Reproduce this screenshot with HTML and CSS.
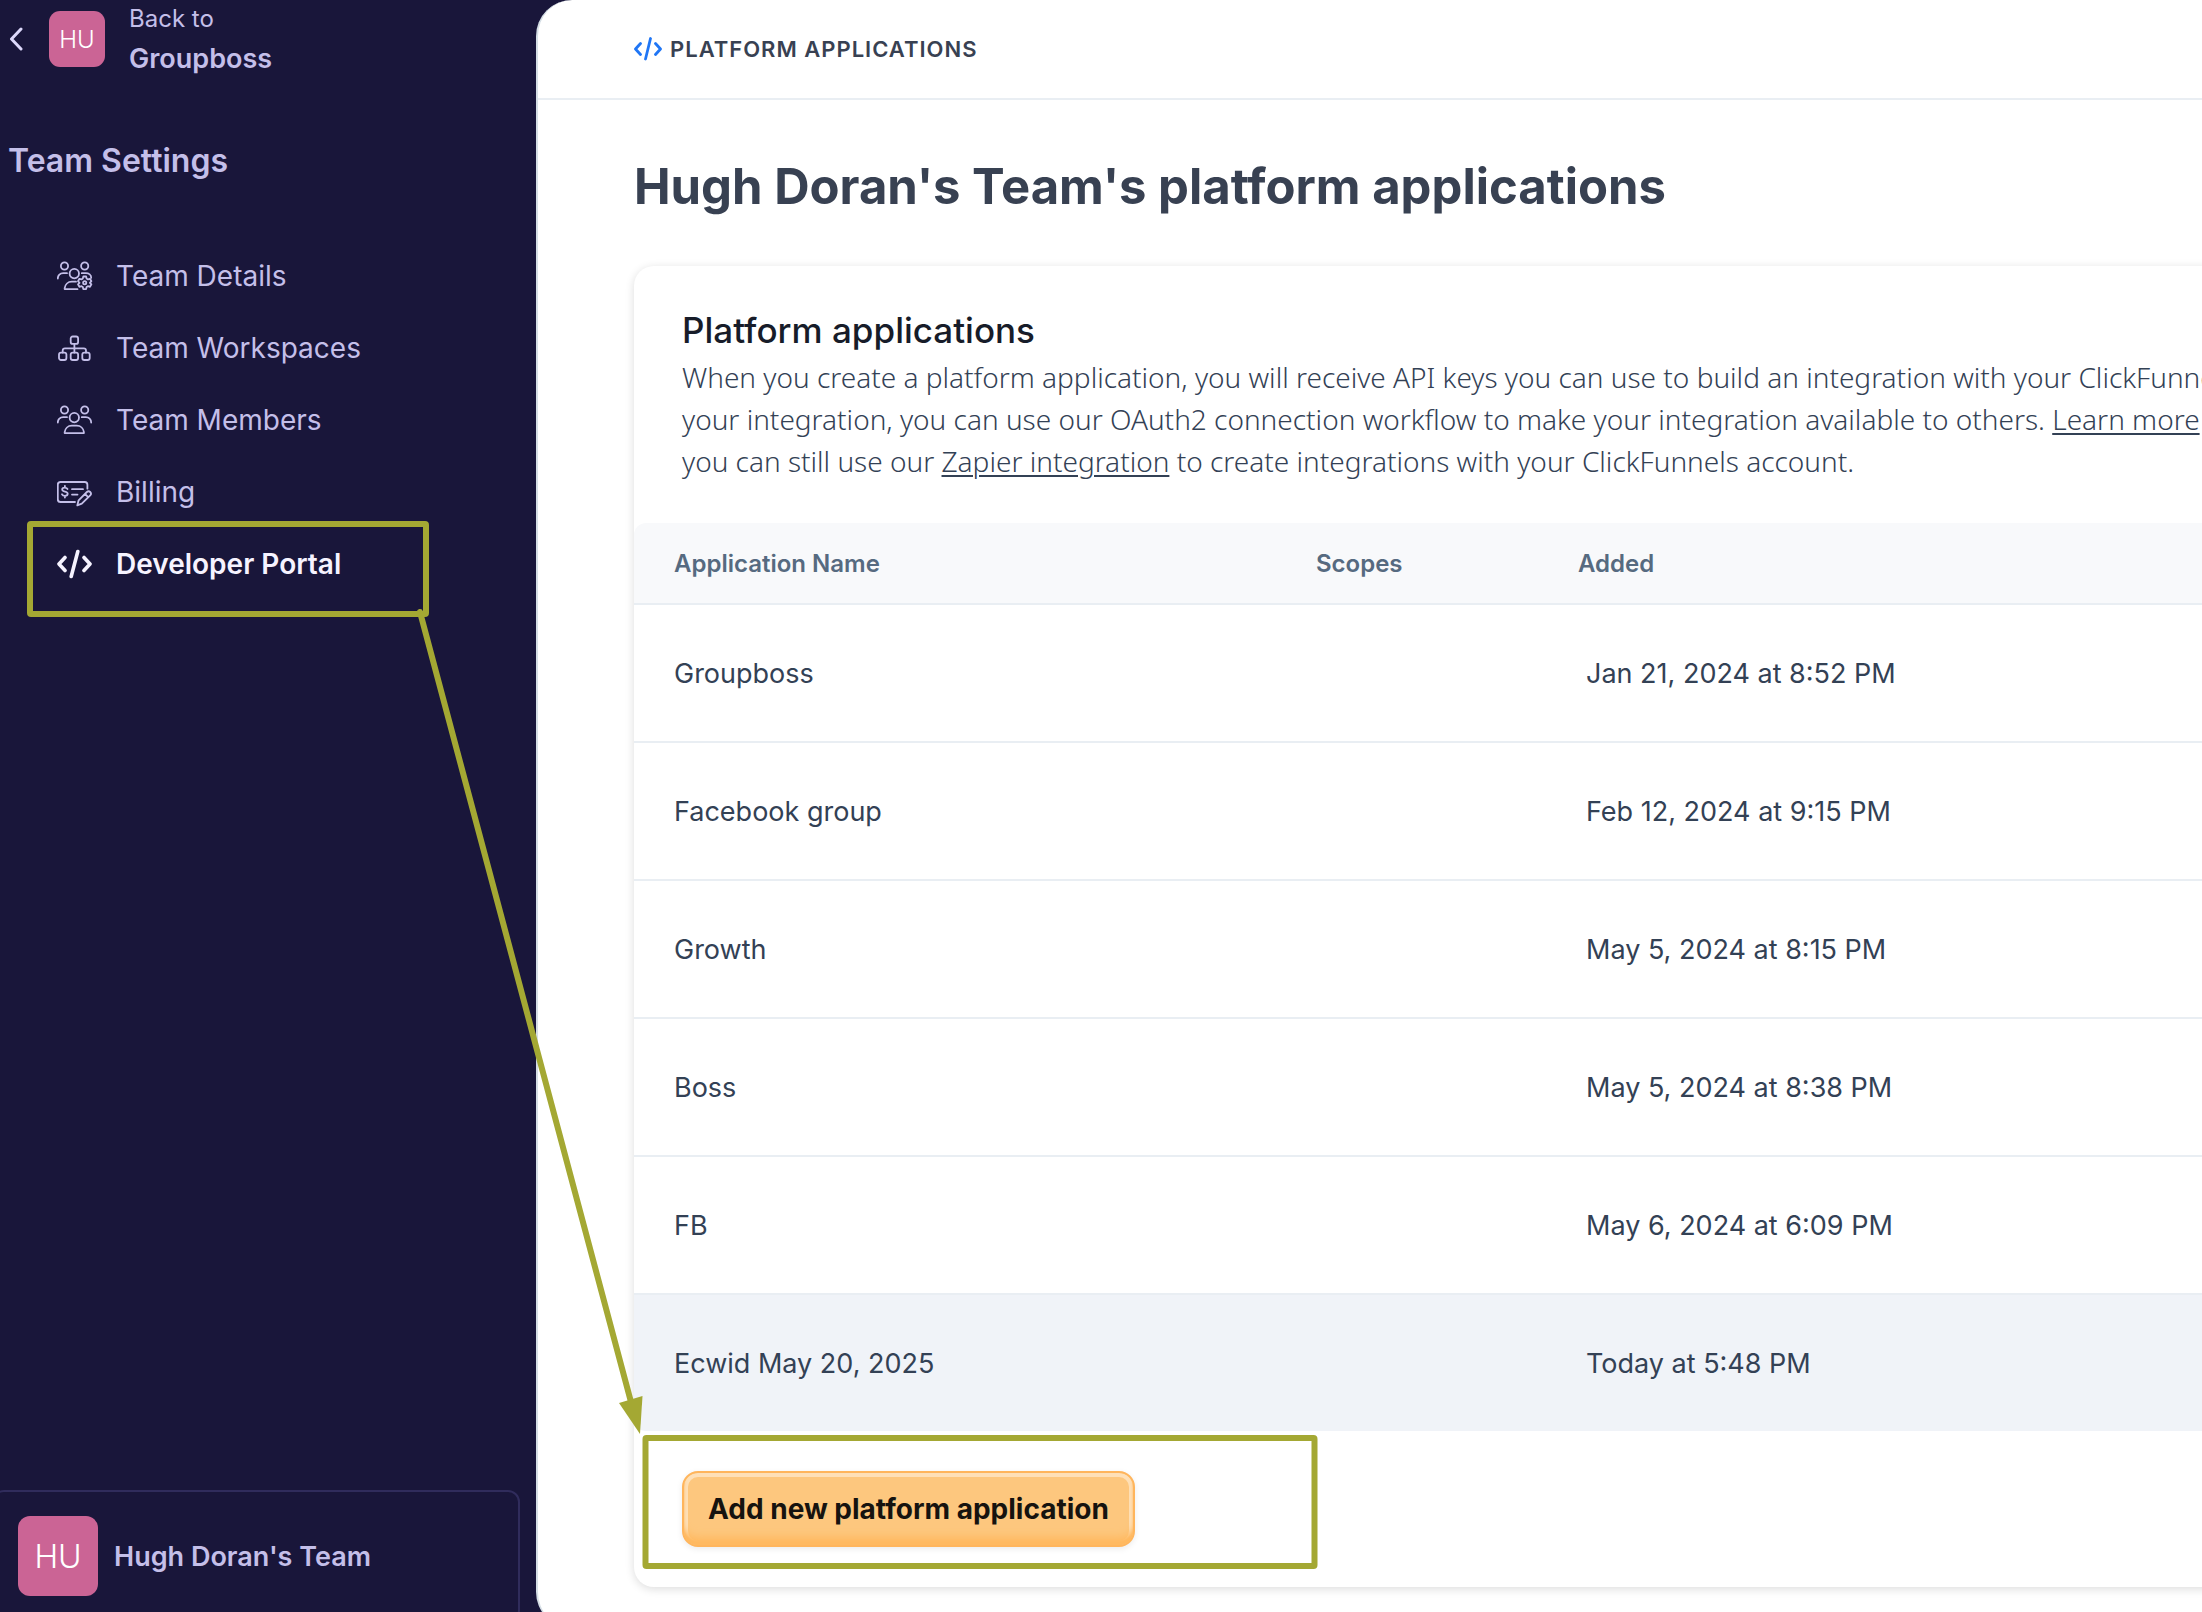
FILE: index.html
```html
<!DOCTYPE html>
<html lang="en">
<head>
<meta charset="UTF-8">
<meta name="viewport" content="width=device-width, initial-scale=1.0">
<title>Platform Applications</title>
<link rel="stylesheet" href="styles.css">
</head>
<body>
    <div class="shell">
        <aside class="sidebar">
            <a class="back" href="#">
                <svg class="back-arrow" width="14" height="24" viewBox="0 0 14 24"><path d="M12 2 2.500 12 12 22"/></svg>
                <span class="avatar">HU</span>
                <span class="back-text">
                    <span class="back-label">Back to</span>
                    <span class="back-name">Groupboss</span>
                </span>
            </a>

            <h2 class="sidebar-title">Team Settings</h2>

            <nav class="menu">
                <a class="menu-item" href="#">
                    <svg class="icon" width="36" height="30" viewBox="0 0 36 30">
                        <circle cx="7.500" cy="5" r="3.600"/>
                        <circle cx="27.700" cy="5" r="3.600"/>
                        <circle cx="17.300" cy="12.600" r="4.700"/>
                        <path d="M.8 17.500c0-3.400 2.300-5.300 5.400-5.300h3.800M24.800 12.200h4c3 0 5.400 1.900 5.400 4.600"/>
                        <path d="M20.500 28.200H8.200c-.5 0-.7-.3-.6-.8.500-4 3.400-6.700 7.200-6.700h4.200"/>
                        <circle cx="27.700" cy="21.800" r="1.600"/>
                        <path d="M26.300 15.500h2.800l.5 2.100 1.300.8 2.100-.6 1.400 2.400-1.500 1.600 1.500 1.600-1.400 2.400-2.100-.6-1.300.8-.5 2.100h-2.800l-.5-2.100-1.300-.8-2.100.6-1.400-2.400 1.500-1.600-1.500-1.600 1.400-2.400 2.100.6 1.300-.8z"/>
                    </svg>
                    Team Details
                </a>
                <a class="menu-item" href="#">
                    <svg class="icon" width="36" height="30" viewBox="0 0 36 30">
                        <rect x="13.700" y="3.500" width="7.400" height="7.400" rx="2"/>
                        <rect x="2" y="19.600" width="7.400" height="7.400" rx="2"/>
                        <rect x="13.700" y="19.600" width="7.400" height="7.400" rx="2"/>
                        <rect x="25.300" y="19.600" width="7.400" height="7.400" rx="2"/>
                        <path d="M17.400 10.900v8.700M5.700 19.600v-2c0-1.500.8-2.300 2.300-2.300h18.700c1.500 0 2.300.8 2.300 2.300v2"/>
                    </svg>
                    Team Workspaces
                </a>
                <a class="menu-item" href="#">
                    <svg class="icon" width="36" height="30" viewBox="0 0 36 30">
                        <circle cx="7.500" cy="5" r="3.600"/>
                        <circle cx="27.700" cy="5" r="3.600"/>
                        <circle cx="17.300" cy="12.600" r="4.700"/>
                        <path d="M.8 17.500c0-3.400 2.300-5.300 5.400-5.300h3.800M34.200 17.500c0-3.400-2.300-5.300-5.400-5.300h-4"/>
                        <path d="M14.800 20.700h5c3.800 0 6.700 2.700 7.200 6.700.1.500-.1.800-.6.800H8.200c-.5 0-.7-.3-.6-.8.500-4 3.400-6.700 7.200-6.700z"/>
                    </svg>
                    Team Members
                </a>
                <a class="menu-item" href="#">
                    <svg class="icon" width="36" height="30" viewBox="0 0 36 30">
                        <path d="M18 25H3.500C1.800 25 .8 24 .8 22.300V7.700C.8 6 1.800 5 3.500 5h24.200c1.700 0 2.700 1 2.700 2.700v4"/>
                        <path d="M10.500 12c-.6-1-1.600-1.400-2.800-1.400-1.500 0-2.500.7-2.500 1.900 0 3 5.500 1.300 5.500 4.300 0 1.300-1.100 2-2.700 2-1.400 0-2.500-.5-3-1.500M7.900 8.800v1.800M7.900 18.800v1.800M15 12.200h11M15 17.600h5.500"/>
                        <path d="M20.300 28.400l1.300-5.100 8.300-8.300c1-1 2.300-1 3.300 0s1 2.300 0 3.300l-8.400 8.300zM28 17l3.200 3.200"/>
                    </svg>
                    Billing
                </a>
                <a class="menu-item active" href="#">
                    <svg class="icon" width="36" height="30" viewBox="0 0 36 30">
                        <path d="M8 8.500 2 15l6 6.500M27 8.500l6 6.500-6 6.500M20.800 2.500l-6.600 25"/>
                    </svg>
                    Developer Portal
                </a>
            </nav>

            <a class="team" href="#">
                <span class="avatar avatar-large">HU</span>
                Hugh Doran's Team
            </a>
        </aside>

        <main class="main">
            <header class="topbar">
                <svg class="topbar-icon" width="28" height="24" viewBox="0 0 28 24">
                    <path d="M6.500 6.500 1.500 12l5 5.500M21.500 6.500l5 5.500-5 5.500M16.500 1.500l-5 20.500"/>
                </svg>
                <span class="topbar-title">PLATFORM APPLICATIONS</span>
            </header>

            <div class="content">
                <h1 class="page-title">Hugh Doran's Team's platform applications</h1>

                <section class="card">
                    <div class="card-head">
                        <h2 class="card-title">Platform applications</h2>
                        <p class="card-text">When you create a platform application, you will receive API keys you can use to build an integration with your ClickFunnels<br>
                        your integration, you can use our OAuth2 connection workflow to make your integration available to others. <a href="#">Learn more</a><br>
                        you can still use our <a href="#">Zapier integration</a> to create integrations with your ClickFunnels account.</p>
                    </div>

                    <table class="apps">
                        <thead>
                            <tr><th class="col-name">Application Name</th><th class="col-scopes">Scopes</th><th>Added</th></tr>
                        </thead>
                        <tbody>
                            <tr><td>Groupboss</td><td></td><td class="date">Jan 21, 2024 at 8:52 PM</td></tr>
                            <tr><td>Facebook group</td><td></td><td class="date">Feb 12, 2024 at 9:15 PM</td></tr>
                            <tr><td>Growth</td><td></td><td class="date">May 5, 2024 at 8:15 PM</td></tr>
                            <tr><td>Boss</td><td></td><td class="date">May 5, 2024 at 8:38 PM</td></tr>
                            <tr><td>FB</td><td></td><td class="date">May 6, 2024 at 6:09 PM</td></tr>
                            <tr class="selected"><td>Ecwid May 20, 2025</td><td></td><td class="date">Today at 5:48 PM</td></tr>
                        </tbody>
                    </table>

                    <div class="card-foot">
                        <button type="button" class="add-button">Add new platform application</button>
                    </div>
                </section>
            </div>
        </main>

        <!-- highlight boxes and the arrow between them -->
        <svg class="marks" width="1400" height="1612" viewBox="0 0 1400 1612">
            <rect x="30" y="524" width="396" height="90" rx="1"/>
            <rect x="645.500" y="1438" width="669" height="128" rx="1"/>
            <path d="M420 612 631 1402"/>
            <path class="arrow-head" d="M619 1403 642.500 1396 640 1434z"/>
        </svg>
    </div>
</body>
</html>
```
FILE: styles.css
```css
* {
    box-sizing: border-box;
}
body {
    margin: 0;
    font-family: Inter, "Liberation Sans", sans-serif;
    background-color: #19163a;
}
h1, h2, p {
    margin: 0;
}
a {
    color: inherit;
}
.shell {
    position: relative;
    display: flex;
    height: 100vh;
    overflow: hidden;
}

/* Sidebar */
.sidebar {
    flex: 0 0 536px;
    display: flex;
    flex-direction: column;
    color: #c4bfe9;
}
.back {
    display: flex;
    align-items: center;
    height: 78px;
    padding-left: 9px;
    text-decoration: none;
}
.back-arrow {
    margin-right: 26px;
    fill: none;
    stroke: #dcd8fb;
    stroke-width: 3;
    stroke-linecap: round;
    stroke-linejoin: round;
}
.avatar {
    display: flex;
    align-items: center;
    justify-content: center;
    width: 56px;
    height: 56px;
    border-radius: 11px;
    background-color: #cb6495;
    color: #fff;
    font-size: 24px;
    font-weight: 300;
}
.avatar-large {
    width: 80px;
    height: 80px;
    border-radius: 12px;
    font-size: 32px;
}
.back-text {
    display: flex;
    flex-direction: column;
    margin-left: 24px;
    line-height: 40px;
}
.back-label {
    font-size: 24px;
}
.back-name {
    font-size: 27px;
    font-weight: 600;
}
.sidebar-title {
    margin-top: 63px;
    padding-left: 8px;
    font-size: 32px;
    font-weight: 600;
    line-height: 40px;
}
.menu {
    margin-top: 59px;
    padding-left: 57px;
}
.menu-item {
    display: flex;
    align-items: center;
    gap: 23px;
    height: 72px;
    font-size: 28px;
    text-decoration: none;
}
.menu-item.active {
    color: #f6f3ff;
    font-weight: 600;
}
.icon {
    fill: none;
    stroke: currentColor;
    stroke-width: 1.8;
    stroke-linecap: round;
    stroke-linejoin: round;
}
.active .icon {
    stroke-width: 3.6;
}
.team {
    display: flex;
    gap: 16px;
    align-items: center;
    height: 132px;
    margin: auto 16px -10px -8px;
    padding-left: 24px;
    border: 2px solid #302c5c;
    border-radius: 12px;
    font-size: 27px;
    font-weight: 600;
    text-decoration: none;
}

/* Main panel */
.main {
    flex: 1;
    min-width: 0;
    margin-bottom: -16px;
    overflow: hidden;
    border-left: 2px solid #d5dee5;
    border-radius: 36px 0 0 36px;
    background-color: #fff;
}
.topbar {
    display: flex;
    align-items: center;
    gap: 8px;
    height: 100px;
    padding-left: 96px;
    border-bottom: 2px solid #e9eef3;
}
.topbar-icon {
    fill: none;
    stroke: #2076f5;
    stroke-width: 2.8;
    stroke-linecap: round;
    stroke-linejoin: round;
}
.topbar-title {
    color: #384152;
    font-size: 22px;
    font-weight: 600;
    letter-spacing: 1px;
}
.content {
    padding: 59px 0 0 96px;
}
.page-title {
    color: #384152;
    font-size: 49px;
    font-weight: 700;
    line-height: 56px;
    white-space: nowrap;
}
.card {
    margin: 51px -80px 0 0;
    border-radius: 20px;
    box-shadow: 0 2px 10px rgba(0, 0, 0, 0.14);
}
.card-head {
    padding: 42px 48px 41px;
}
.card-title {
    color: #171c29;
    font-size: 35px;
    font-weight: 500;
    line-height: 44px;
}
.card-text {
    margin-top: 4px;
    color: #334155;
    font-family: "Noto Sans", "Liberation Sans", sans-serif;
    font-size: 28px;
    font-weight: 300;
    line-height: 42px;
    white-space: nowrap;
}
.card-text a {
    text-decoration-thickness: 2px;
    text-underline-offset: 3px;
}

/* Applications table */
.apps {
    width: 100%;
    border-collapse: separate;
    border-spacing: 0;
    table-layout: fixed;
}
.apps th {
    height: 82px;
    padding: 0;
    border-bottom: 2px solid #e9eef3;
    background-color: #f8f9fb;
    color: #566a80;
    font-size: 24px;
    font-weight: 600;
    text-align: left;
}
.apps th:first-child {
    border-top-left-radius: 12px;
}
.apps .col-name {
    width: 682px;
}
.apps .col-scopes {
    width: 262px;
}
.apps td {
    height: 138px;
    padding: 0;
    border-bottom: 2px solid #e9eef3;
    color: #334155;
    font-size: 27px;
}
.apps th:first-child, .apps td:first-child {
    padding-left: 40px;
}
.apps .date {
    padding-left: 8px;
}
.apps .selected td {
    height: 136px;
    border-bottom: 0;
    background-color: #f0f3f8;
}
.apps .selected td:first-child {
    border-bottom-left-radius: 12px;
}
.card-foot {
    padding: 40px 48px;
}
.add-button {
    display: block;
    height: 76px;
    padding: 0 24px;
    border: 2px solid #ffb55c;
    border-radius: 16px;
    background-color: #fdc77e;
    box-shadow: inset 0 -4px 2px #ffb960, inset 0 -12px 8px -4px #ffb960, inset 0 0 0 4px #fee0b8, 0 2px 6px rgba(0, 0, 0, 0.08);
    color: #16130f;
    font-family: inherit;
    font-size: 28px;
    font-weight: 700;
    cursor: pointer;
}

.marks {
    position: absolute;
    top: 0;
    left: 0;
    fill: none;
    stroke: #a4a833;
    stroke-width: 6;
    stroke-linecap: round;
    pointer-events: none;
}
.marks .arrow-head {
    fill: #a4a833;
    stroke: none;
}
```
